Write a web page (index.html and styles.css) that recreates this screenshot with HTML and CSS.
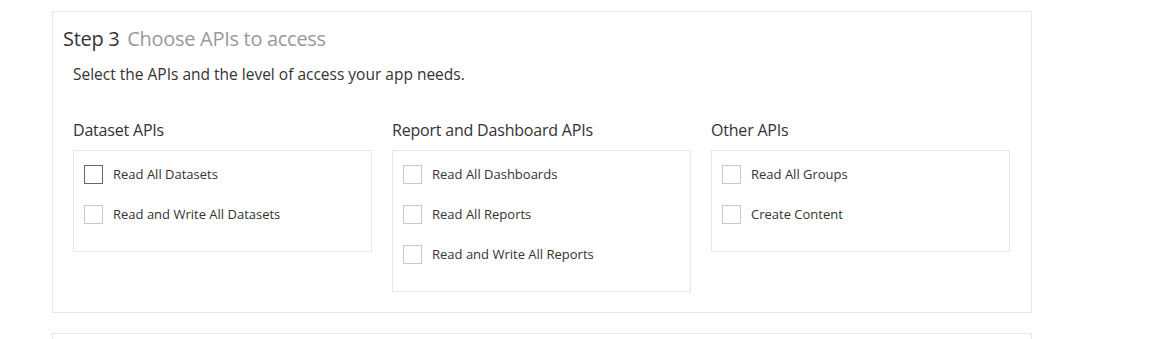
FILE: index.html
```html
<!DOCTYPE html>
<html lang="en">
<head>
  <meta charset="UTF-8">
  <meta name="viewport" content="width=device-width, initial-scale=1">
  <title>Register an app</title>
  <link rel="stylesheet" href="styles.css">
</head>
<body>

<!-- Passo 3 -->
<div class="step-card">
  <h2 class="step-title">Step 3 <span class="step-name">Choose APIs to access</span></h2>
  <p class="step-desc">Select the APIs and the level of access your app needs.</p>

  <div class="api-columns">
    <div class="api-group">
      <h3>Dataset APIs</h3>
      <div class="api-box">
        <label class="api-item"><span class="check focused"></span>Read All Datasets</label>
        <label class="api-item"><span class="check"></span>Read and Write All Datasets</label>
      </div>
    </div>
    <div class="api-group">
      <h3>Report and Dashboard APIs</h3>
      <div class="api-box">
        <label class="api-item"><span class="check"></span>Read All Dashboards</label>
        <label class="api-item"><span class="check"></span>Read All Reports</label>
        <label class="api-item"><span class="check"></span>Read and Write All Reports</label>
      </div>
    </div>
    <div class="api-group">
      <h3>Other APIs</h3>
      <div class="api-box">
        <label class="api-item"><span class="check"></span>Read All Groups</label>
        <label class="api-item"><span class="check"></span>Create Content</label>
      </div>
    </div>
  </div>
</div>

<!-- Passo 4 -->
<div class="step-card next"></div>

</body>
</html>
```

FILE: styles.css
```css
body {
  font-family: "Open Sans", "Liberation Sans", sans-serif;
  background: #fff;
  color: #333;
  margin: 0;
  padding: 11px 0 0 52px;
}
.step-card {
  width: 980px;
  box-sizing: border-box;
  border: 1px solid #e6e6e6;
  padding: 13px 20px 20px 10px;
}
.step-card.next {
  margin-top: 20px;
  height: 40px;
}
.step-title {
  margin: 0;
  font-size: 20px;
  font-weight: normal;
  line-height: 28px;
  color: #333;
  letter-spacing: -0.3px;
}
.step-name {
  color: #999;
  margin-left: 3px;
}
.step-desc {
  margin: 11px 0 0 10px;
  font-size: 15.5px;
  line-height: 20px;
}
.api-columns {
  display: flex;
  gap: 20px;
  margin: 35px 0 0 10px;
  align-items: flex-start;
}
.api-group {
  width: 299px;
}
.api-group h3 {
  margin: 0 0 9px;
  font-size: 16px;
  font-weight: normal;
  line-height: 22px;
  letter-spacing: -0.2px;
}
.api-box {
  border: 1px solid #e6e6e6;
  padding: 14px 10px 27px;
  display: flex;
  flex-direction: column;
  gap: 21px;
}
.api-item {
  display: flex;
  align-items: center;
  gap: 10px;
  font-size: 13px;
  line-height: 19px;
  color: #333;
  cursor: pointer;
}
.check {
  width: 19px;
  height: 19px;
  box-sizing: border-box;
  border: 1px solid #c8c8c8;
  background: #fff;
  flex-shrink: 0;
}
.check.focused {
  border-color: #666;
}
```
